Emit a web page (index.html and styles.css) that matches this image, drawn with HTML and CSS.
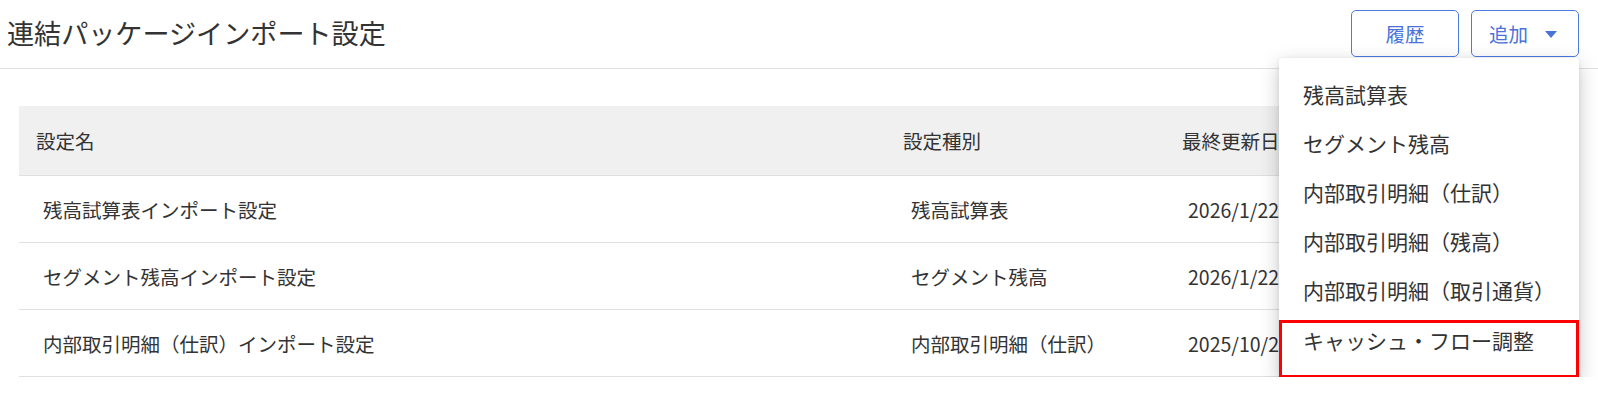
FILE: index.html
```html
<!DOCTYPE html>
<html lang="ja">
<head>
<meta charset="utf-8">
<title>連結パッケージインポート設定</title>
<link rel="stylesheet" href="styles.css">
</head>
<body>
<header class="topbar">
  <h1 class="title">連結パッケージインポート設定</h1>
  <div class="actions">
    <button class="btn">履歴</button>
    <button class="btn btn-add">追加<span class="caret"></span></button>
    <ul class="menu">
      <li class="menu-item">残高試算表</li>
      <li class="menu-item">セグメント残高</li>
      <li class="menu-item">内部取引明細（仕訳）</li>
      <li class="menu-item">内部取引明細（残高）</li>
      <li class="menu-item">内部取引明細（取引通貨）</li>
      <li class="menu-item menu-item-hl">キャッシュ・フロー調整</li>
    </ul>
  </div>
</header>
<main class="content">
  <div class="table">
    <div class="row head">
      <div class="cell">設定名</div>
      <div class="cell">設定種別</div>
      <div class="cell">最終更新日</div>
    </div>
    <div class="row">
      <div class="cell">残高試算表インポート設定</div>
      <div class="cell">残高試算表</div>
      <div class="cell">2026/1/22</div>
    </div>
    <div class="row">
      <div class="cell">セグメント残高インポート設定</div>
      <div class="cell">セグメント残高</div>
      <div class="cell">2026/1/22</div>
    </div>
    <div class="row">
      <div class="cell">内部取引明細（仕訳）インポート設定</div>
      <div class="cell">内部取引明細（仕訳）</div>
      <div class="cell">2025/10/22</div>
    </div>
  </div>
</main>
</body>
</html>
```
FILE: styles.css
```css
* { box-sizing: border-box; }
body {
  margin: 0;
  font-family: "Noto Sans CJK JP", "Noto Sans", sans-serif;
  color: #333;
  background: #fff;
}
.topbar {
  height: 69px;
  border-bottom: 1px solid #e0e0e0;
  display: flex;
  align-items: center;
  justify-content: space-between;
  padding: 0 19px 0 7px;
}
.title {
  margin: 0;
  font-size: 27.1px;
  font-weight: 400;
  color: #333;
  line-height: 1;
  margin-top: -2px;
}
.actions {
  position: relative;
  display: flex;
  gap: 12px;
  margin-top: -1px;
}
.btn {
  width: 108px;
  height: 47px;
  border: 1px solid #4a7de2;
  border-radius: 5px;
  background: #fff;
  color: #4a72d8;
  font-family: inherit;
  font-size: 19.5px;
  display: flex;
  align-items: center;
  justify-content: center;
  padding: 0;
}
.btn-add {
  justify-content: flex-start;
  padding-left: 17px;
}
.caret {
  width: 0;
  height: 0;
  border-left: 6px solid transparent;
  border-right: 6px solid transparent;
  border-top: 7px solid #4a72d8;
  margin-left: 17px;
  margin-top: 2px;
}
.menu {
  position: absolute;
  top: 48px;
  right: 0;
  width: 300px;
  margin: 0;
  padding: 12px 0 1px;
  list-style: none;
  background: #fff;
  border-radius: 4px;
  box-shadow: 0 6px 20px rgba(0, 0, 0, 0.22), 0 1px 4px rgba(0, 0, 0, 0.08);
  z-index: 10;
}
.menu-item {
  height: 49px;
  line-height: 49px;
  padding-left: 24px;
  font-size: 21px;
  color: #333;
  white-space: nowrap;
}
.menu-item-hl {
  height: 58px;
  line-height: 35px;
  border: 3px solid #f00;
  padding-left: 21px;
  margin-top: 5px;
}
.content {
  padding: 37px 19px 0;
}
.table {
  display: flex;
  flex-direction: column;
}
.row {
  display: grid;
  grid-template-columns: 867px 279px 1fr;
  height: 67px;
  border-bottom: 1px solid #e0e0e0;
  align-items: center;
  font-size: 19.5px;
}
.row .cell {
  padding-left: 24px;
  padding-top: 1px;
}
.row .cell:nth-child(2) { padding-left: 25px; }
.row .cell:nth-child(3) { padding-left: 23px; }
.row.head {
  height: 70px;
  background: #f0f0f0;
}
.row.head .cell {
  padding-left: 17px;
  padding-top: 0;
}
```
